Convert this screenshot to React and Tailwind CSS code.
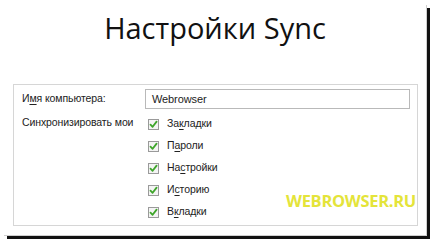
import React from "react";

function Check() {
  return (
    <span className="flex w-[11px] h-[11px] border border-[#9a9a9a] bg-[#f4f4f4] items-center justify-center shrink-0">
      <svg width="9" height="9" viewBox="0 0 9 9">
        <path d="M1.5 4.6 L3.6 6.8 L7.6 1.6" fill="none" stroke="#3ea52a" strokeWidth="1.8" strokeLinecap="round" strokeLinejoin="round" />
      </svg>
    </span>
  );
}

function Item({ pre, u, post }) {
  return (
    <div className="flex items-center h-[22px] gap-[8px]">
      <Check />
      <span>
        {pre}
        <span className="underline underline-offset-2">{u}</span>
        {post}
      </span>
    </div>
  );
}

export default function App() {
  return (
    <div className="w-[434px] h-[242px] bg-white overflow-hidden" style={{ fontFamily: '"Open Sans", "Noto Sans", sans-serif' }}>
      <div className="relative w-[423px] h-[231px] ml-[4px] mt-[5px] bg-white shadow-[3px_3px_0_#111] border-r border-b border-[#cfcfcf]">
        <div className="h-[79px] flex justify-center pt-[3px]">
          <h1 className="text-[29px] leading-[40px] font-normal text-[#111]">Настройки Sync</h1>
        </div>
        <div
          className="ml-[9px] w-[405px] h-[142px] border border-[#d6d6d6] pl-[8px] pt-[4px] text-[10.5px] text-[#222] tracking-[-0.1px]"
          style={{ fontFamily: '"Liberation Sans", Arial, sans-serif' }}
        >
          <div className="flex items-center h-[20px]">
            <div className="w-[123px] whitespace-nowrap">
              И<span className="underline underline-offset-2">м</span>я компьютера:
            </div>
            <div className="w-[265px] h-[20px] border border-[#b9b9b9] flex items-center pl-[6px] text-[11px]">Webrowser</div>
          </div>
          <div className="flex mt-[4px]">
            <div className="w-[126px] leading-[18px] whitespace-nowrap">Синхронизировать мои</div>
            <div className="flex flex-col">
              <Item pre="За" u="к" post="ладки" />
              <Item pre="П" u="а" post="роли" />
              <Item pre="На" u="с" post="тройки" />
              <Item pre="И" u="с" post="торию" />
              <Item pre="В" u="к" post="ладки" />
            </div>
          </div>
        </div>
        <div className="absolute left-[282px] top-[184px] text-[16.5px] font-bold text-[#e4e43a] tracking-[-0.3px]">WEBROWSER.RU</div>
      </div>
    </div>
  );
}
